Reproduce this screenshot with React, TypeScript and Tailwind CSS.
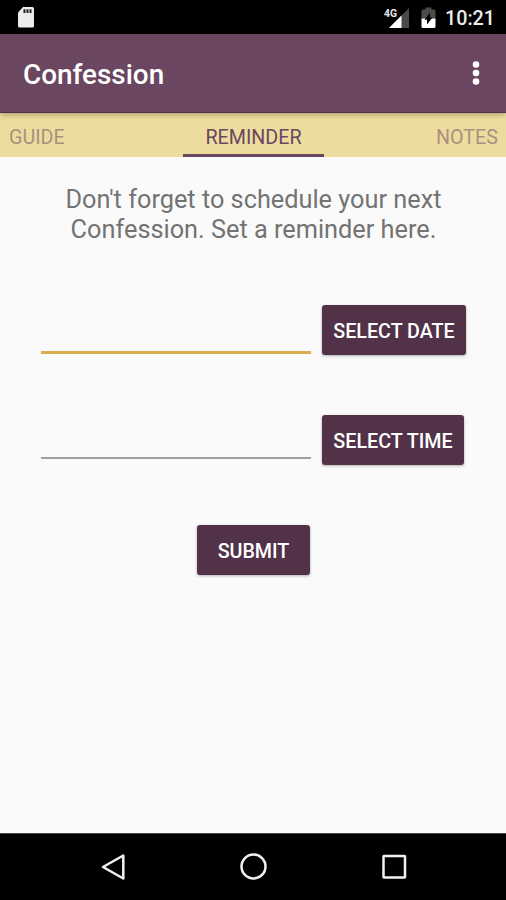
import { useState } from 'react';
import clsx from 'clsx';

type Tab = { label: string; className: string };

const TABS: Tab[] = [
  { label: 'GUIDE', className: 'w-[183px] justify-start pl-[9px]' },
  { label: 'REMINDER', className: 'w-[141px] justify-center' },
  { label: 'NOTES', className: 'w-[182px] justify-end pr-2' },
];

const StatusBar = () => (
  <div className="flex h-[34px] shrink-0 items-center bg-black pr-[11px] pl-[17px] text-white">
    <svg width="18" height="21" viewBox="0 0 18 21" className="mt-px">
      <path d="M6 0H15.5Q17 0 17 1.5V19Q17 20.5 15.5 20.5H2.5Q1 20.5 1 19V5.5Z" fill="#ececec" />
      <path d="M6.5 2.3H8.5V6H6.5ZM9.5 2.3H11.5V6H9.5ZM12.5 2.3H14.5V6H12.5Z" fill="#222" />
    </svg>
    <svg width="27" height="22" viewBox="0 0 27 22" className="mt-px ml-auto">
      <path d="M26 1V21H6Z" fill="#4a4a4a" />
      <path d="M18.5 8.5V21H6Z" fill="#fff" />
      <text
        x="1"
        y="9.5"
        fill="#e8e8e8"
        fontFamily="Roboto, sans-serif"
        fontSize="11.5"
        fontWeight="700"
        textLength="13"
        lengthAdjust="spacingAndGlyphs"
      >
        4G
      </text>
    </svg>
    <svg width="15" height="22" viewBox="0 0 15 22" className="mt-px ml-[11px]">
      <path d="M4.500 0.500H10.500V2.500H13Q14.500 2.500 14.500 4V11.500H0.500V4Q0.500 2.500 2 2.500H4.500Z" fill="#4a4a4a" />
      <path d="M0.500 11.500H14.500V19.500Q14.500 21 13 21H2Q0.500 21 0.500 19.500Z" fill="#fff" />
      <path d="M9 5.500V10.500H11.500L6 17.500V12.700H3.500Z" fill="#000" />
    </svg>
    <span className="mt-[3px] ml-[9px] text-[19.7px] leading-none font-medium text-[#ececec]">10:21</span>
  </div>
);

const ActionButton = ({
  children,
  className,
}: {
  children: string;
  className?: string;
}) => (
  <button
    type="button"
    className={clsx(
      'h-[50px] shrink-0 rounded-[3px] bg-[#513249] pt-[3px] text-[19.7px] font-medium whitespace-nowrap text-white shadow-[0_1px_3px_rgba(0,0,0,0.3)]',
      className,
    )}
  >
    {children}
  </button>
);

const NavigationBar = () => (
  <div className="flex h-[67px] shrink-0 items-center justify-between border-t border-[#444] bg-black px-[99px]">
    <svg width="28" height="28" viewBox="0 0 28 28" fill="none" stroke="#f2f2f2" strokeWidth="2.5">
      <path d="M24.3 2.5V25.5L4 14Z" strokeLinejoin="round" />
    </svg>
    <svg width="28" height="28" viewBox="0 0 28 28" fill="none" stroke="#f2f2f2" strokeWidth="2.5">
      <circle cx="14.5" cy="13.5" r="12" />
    </svg>
    <svg width="28" height="28" viewBox="0 0 28 28" fill="none" stroke="#f2f2f2" strokeWidth="2.5">
      <rect x="4.5" y="3" width="21.5" height="21.5" rx="0.5" />
    </svg>
  </div>
);

export default function App() {
  const [activeTab, setActiveTab] = useState('REMINDER');
  const [date, setDate] = useState('');
  const [time, setTime] = useState('');

  return (
    <div className="flex h-[900px] w-[506px] flex-col overflow-hidden bg-[#fafafa] font-[Roboto,sans-serif]">
      <StatusBar />

      <header className="z-10 flex h-[79px] shrink-0 items-center justify-between border-b border-[#523249] bg-[#6a4660] pr-[26px] pl-[23px] shadow-[0_2px_5px_rgba(0,0,0,0.25)]">
        <h1 className="mt-[4px] text-[27.9px] leading-none font-medium text-white">Confession</h1>
        <button type="button" aria-label="More options">
          <svg width="8" height="26" viewBox="0 0 8 26" fill="#fff">
            <circle cx="4" cy="4.5" r="3.3" />
            <circle cx="4" cy="13" r="3.3" />
            <circle cx="4" cy="21.5" r="3.3" />
          </svg>
        </button>
      </header>

      <nav className="flex h-[44px] shrink-0 bg-[#ecdd9e]">
        {TABS.map(({ label, className }) => (
          <button
            key={label}
            type="button"
            onClick={() => setActiveTab(label)}
            className={clsx(
              'flex items-center border-b-[3px] pt-[9px] text-[19.7px]',
              className,
              activeTab === label
                ? 'border-[#6a4660] text-[#6a4660]'
                : 'border-transparent text-[#ab9080]',
            )}
          >
            {label}
          </button>
        ))}
      </nav>

      <main className="flex flex-1 flex-col">
        <p className="mt-[28px] pl-px text-center text-[25.3px] leading-[30px] text-[#737373]">
          Don't forget to schedule your next
          <br />
          Confession. Set a reminder here.
        </p>

        <div className="mt-[60px] flex h-[50px] gap-[11px] pl-[41px]">
          <input
            aria-label="Date"
            value={date}
            onChange={(e) => setDate(e.target.value)}
            className="h-[49px] w-[270px] border-b-[3px] border-[#d9ae4c] text-[25px] outline-none"
          />
          <ActionButton className="w-[144px]">SELECT DATE</ActionButton>
        </div>

        <div className="mt-[60px] flex h-[50px] gap-[11px] pl-[41px]">
          <input
            aria-label="Time"
            value={time}
            onChange={(e) => setTime(e.target.value)}
            className="h-[44px] w-[270px] border-b-2 border-[#a0a0a0] text-[25px] outline-none"
          />
          <ActionButton className="w-[142px]">SELECT TIME</ActionButton>
        </div>

        <ActionButton className="mt-[60px] ml-[197px] w-[113px]">SUBMIT</ActionButton>
      </main>

      <NavigationBar />
    </div>
  );
}
